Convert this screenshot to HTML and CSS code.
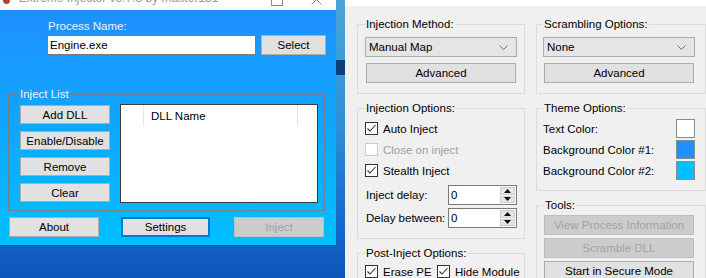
FILE: index.html
```html
<!DOCTYPE html>
<html>
<head>
<meta charset="utf-8">
<title>Extreme Injector</title>
<link rel="stylesheet" href="styles.css">
</head>
<body>
<div class="desktop">
  <div class="desk-mark"></div>

  <div class="win win-main">
    <div class="titlebar">
      <span class="app-icon"></span>
      <span class="title">Extreme Injector v3.7.3 by master131</span>
      <span class="ctrl ctrl-min"></span>
      <span class="ctrl ctrl-max"></span>
      <span class="ctrl ctrl-close">
        <svg width="11" height="11" viewBox="0 0 11 11"><path d="M0.5 0.5L10.5 10.5M10.5 0.5L0.5 10.5" stroke="#8a8a8a" stroke-width="1" fill="none"/></svg>
      </span>
    </div>
    <div class="main-client">
      <div class="proc-label">Process Name:</div>
      <div class="proc-row">
        <div class="textbox">Engine.exe</div>
        <button class="btn btn-select">Select</button>
      </div>
      <fieldset class="inject-list">
        <legend>Inject List</legend>
        <div class="il-body">
          <div class="il-buttons">
            <button class="btn btn-il">Add DLL</button>
            <button class="btn btn-il">Enable/Disable</button>
            <button class="btn btn-il">Remove</button>
            <button class="btn btn-il">Clear</button>
          </div>
          <div class="listbox">
            <div class="lb-header">
              <span class="lb-col lb-c0"></span>
              <span class="lb-col lb-c1">DLL Name</span>
              <span class="lb-col lb-c2"></span>
            </div>
          </div>
        </div>
      </fieldset>
      <div class="bottom-row">
        <button class="btn btn-bottom btn-about">About</button>
        <button class="btn btn-bottom btn-settings">Settings</button>
        <button class="btn btn-bottom btn-disabled btn-inject">Inject</button>
      </div>
    </div>
  </div>

  <div class="win win-settings">
    <div class="titlebar titlebar-settings"></div>
    <div class="settings-client">
      <div class="col col-left">
        <fieldset class="grp grp-method">
          <legend>Injection Method:</legend>
          <div class="combo"><span>Manual Map</span>
            <svg class="chev" width="9" height="5" viewBox="0 0 9 5"><polyline points="0.5,0.5 4.5,4.5 8.5,0.5" fill="none" stroke="#6d6d6d" stroke-width="1"/></svg>
          </div>
          <button class="btn btn-wide">Advanced</button>
        </fieldset>

        <fieldset class="grp grp-options">
          <legend>Injection Options:</legend>
          <div class="chk">
            <span class="box"><svg width="11" height="11" viewBox="0 0 11 11"><polyline points="1.5,5.5 4,8 9.5,2" fill="none" stroke="#333" stroke-width="1.1"/></svg></span>
            <span>Auto Inject</span>
          </div>
          <div class="chk chk-disabled">
            <span class="box"></span>
            <span>Close on inject</span>
          </div>
          <div class="chk">
            <span class="box"><svg width="11" height="11" viewBox="0 0 11 11"><polyline points="1.5,5.5 4,8 9.5,2" fill="none" stroke="#333" stroke-width="1.1"/></svg></span>
            <span>Stealth Inject</span>
          </div>
          <div class="num-row num-first">
            <span class="num-label">Inject delay:</span>
            <div class="numeric"><span class="num-val">0</span>
              <div class="spin">
                <span class="spin-btn"><svg width="7" height="4" viewBox="0 0 7 4"><polygon points="3.5,0 7,4 0,4" fill="#111"/></svg></span>
                <span class="spin-btn"><svg width="7" height="4" viewBox="0 0 7 4"><polygon points="0,0 7,0 3.5,4" fill="#111"/></svg></span>
              </div>
            </div>
          </div>
          <div class="num-row">
            <span class="num-label">Delay between:</span>
            <div class="numeric"><span class="num-val">0</span>
              <div class="spin">
                <span class="spin-btn"><svg width="7" height="4" viewBox="0 0 7 4"><polygon points="3.5,0 7,4 0,4" fill="#111"/></svg></span>
                <span class="spin-btn"><svg width="7" height="4" viewBox="0 0 7 4"><polygon points="0,0 7,0 3.5,4" fill="#111"/></svg></span>
              </div>
            </div>
          </div>
        </fieldset>

        <fieldset class="grp grp-post">
          <legend>Post-Inject Options:</legend>
          <div class="chk-row">
            <div class="chk chk-erase">
              <span class="box"><svg width="11" height="11" viewBox="0 0 11 11"><polyline points="1.5,5.5 4,8 9.5,2" fill="none" stroke="#333" stroke-width="1.1"/></svg></span>
              <span>Erase PE</span>
            </div>
            <div class="chk">
              <span class="box"><svg width="11" height="11" viewBox="0 0 11 11"><polyline points="1.5,5.5 4,8 9.5,2" fill="none" stroke="#333" stroke-width="1.1"/></svg></span>
              <span>Hide Module</span>
            </div>
          </div>
        </fieldset>
      </div>

      <div class="col col-right">
        <fieldset class="grp grp-scramble">
          <legend>Scrambling Options:</legend>
          <div class="combo"><span>None</span>
            <svg class="chev" width="9" height="5" viewBox="0 0 9 5"><polyline points="0.5,0.5 4.5,4.5 8.5,0.5" fill="none" stroke="#6d6d6d" stroke-width="1"/></svg>
          </div>
          <button class="btn btn-wide">Advanced</button>
        </fieldset>

        <fieldset class="grp grp-theme">
          <legend>Theme Options:</legend>
          <div class="theme-row"><span>Text Color:</span><span class="swatch sw-white"></span></div>
          <div class="theme-row"><span>Background Color #1:</span><span class="swatch sw-blue1"></span></div>
          <div class="theme-row"><span>Background Color #2:</span><span class="swatch sw-blue2"></span></div>
        </fieldset>

        <fieldset class="grp grp-tools">
          <legend>Tools:</legend>
          <button class="btn btn-tool btn-disabled">View Process Information</button>
          <button class="btn btn-tool btn-disabled">Scramble DLL</button>
          <button class="btn btn-tool">Start in Secure Mode</button>
        </fieldset>
      </div>
    </div>
  </div>
</div>
</body>
</html>
```

FILE: styles.css
```css
* { box-sizing: border-box; }

html, body {
  margin: 0;
  padding: 0;
}

body {
  width: 706px;
  height: 278px;
  overflow: hidden;
  font-family: "Segoe UI", "Liberation Sans", Arial, sans-serif;
  font-size: 11.5px;
  color: #000;
}

.desktop {
  position: relative;
  width: 706px;
  height: 278px;
  overflow: hidden;
  background: linear-gradient(180deg, #4aa6d8 0%, #2f8fd6 45%, #1467c9 82%, #0b55b8 100%);
}

.desk-mark {
  position: absolute;
  left: 336px;
  top: 60px;
  width: 9px;
  height: 15px;
  background: #0b3f78;
}

/* ---------- windows ---------- */
.win {
  position: absolute;
  display: flex;
  flex-direction: column;
}

.win-main {
  left: 0;
  top: -11px;
  width: 336px;
  height: 256px;
}

.win-settings {
  left: 345px;
  top: -20px;
  width: 370px;
  height: 320px;
  background: #f0f0f0;
}

.titlebar {
  height: 21px;
  flex: none;
  background: #fff;
  display: flex;
  align-items: center;
  position: relative;
}

.titlebar-settings {
  height: 26px;
}

.app-icon {
  width: 8px;
  height: 8px;
  margin-left: 3px;
  border-radius: 50%;
  background: #b5452a;
}

.title {
  margin-left: 9px;
  margin-top: -3px;
  color: #9a9a9a;
  font-size: 12px;
  white-space: nowrap;
  flex: 1;
}

.ctrl {
  width: 46px;
  height: 21px;
  display: flex;
  align-items: center;
  justify-content: center;
}

.ctrl-max::before {
  content: "";
  width: 10px;
  height: 10px;
  border: 1px solid #8a8a8a;
}

.ctrl-min::before {
  content: "";
  width: 10px;
  height: 1px;
  background: #8a8a8a;
}

/* ---------- main client ---------- */
.main-client {
  flex: 1;
  background: linear-gradient(180deg, #1e90ff 0%, #00bfff 100%);
  color: #fff;
  padding-top: 9px;
}

.proc-label {
  margin-left: 48px;
  height: 15px;
  line-height: 15px;
  color: #f4f0ff;
}

.proc-row {
  display: flex;
  margin-top: 1px;
  margin-left: 47px;
}

.textbox {
  width: 209px;
  height: 20px;
  background: #fff;
  border: 1px solid #7a7a7a;
  color: #000;
  line-height: 18px;
  padding-left: 2px;
}

.btn {
  font-family: inherit;
  font-size: inherit;
  color: #000;
  background: #e1e1e1;
  border: 1px solid #adadad;
  padding: 0;
  margin: 0;
  display: flex;
  align-items: center;
  justify-content: center;
  white-space: nowrap;
}

.btn-select {
  width: 65px;
  height: 20px;
  margin-left: 5px;
}

.inject-list {
  margin: 32px 0 0 8px;
  width: 317px;
  border: 1px solid #6f7d8c;
  padding: 2px 6px 7px 11px;
  min-width: 0;
}

.inject-list legend {
  padding: 0 2px;
  margin-left: -2px;
  line-height: 15px;
  color: #f4f0ff;
}

.il-body {
  display: flex;
}

.il-buttons {
  display: flex;
  flex-direction: column;
  gap: 7px;
  margin-top: 1px;
  width: 90px;
}

.btn-il {
  width: 90px;
  height: 19px;
}

.listbox {
  margin-left: 10px;
  width: 198px;
  height: 99px;
  background: #fff;
  border: 1px solid #3a3a3a;
  color: #000;
}

.lb-header {
  display: flex;
  height: 21px;
}

.lb-col {
  display: flex;
  align-items: center;
  border-right: 1px solid #e5e5e5;
}

.lb-c0 { width: 23px; }
.lb-c1 { width: 154px; padding-left: 7px; }
.lb-c2 { border-right: none; flex: 1; }

.bottom-row {
  display: flex;
  margin-top: 6px;
  margin-left: 9px;
}

.btn-bottom {
  height: 20px;
  width: 90px;
}

.btn-settings {
  margin-left: 22px;
  width: 89px;
  border: 1px solid #0078d7;
  box-shadow: inset 0 0 0 1px #0078d7;
}

.btn-inject {
  margin-left: 24px;
}

.btn-disabled {
  background: #cccccc;
  border-color: #bfbfbf;
  color: #a3a3a3;
}

/* ---------- settings client ---------- */
.settings-client {
  flex: 1;
  display: flex;
  gap: 11px;
  padding: 11px 0 0 12px;
}

.col {
  display: flex;
  flex-direction: column;
  gap: 7px;
}

.col-left { width: 168px; }
.col-right { width: 170px; }

.grp {
  margin: 0;
  min-width: 0;
  width: 100%;
  border: 1px solid #dcdcdc;
  padding: 5px 7px 10px 7px;
}

.grp legend {
  padding: 0 1px;
  margin-left: 0;
  line-height: 15px;
}

.combo {
  height: 20px;
  background: #e5e5e5;
  border: 1px solid #acacac;
  display: flex;
  align-items: center;
  justify-content: space-between;
  padding: 0 8px 0 3px;
}

.btn-wide {
  margin: 6px 1px 0 1px;
  width: calc(100% - 2px);
  height: 20px;
}

.grp-scramble {
  padding-left: 6px;
  padding-right: 10px;
}

.grp-options {
  padding-top: 2px;
}

.chk {
  height: 21px;
  display: flex;
  align-items: center;
  gap: 5px;
  white-space: nowrap;
  flex: none;
}

.box {
  width: 13px;
  height: 13px;
  flex: none;
  background: #fff;
  border: 1px solid #333;
  display: flex;
  align-items: center;
  justify-content: center;
}

.chk-disabled {
  color: #a0a0a0;
}

.chk-disabled .box {
  border-color: #cccccc;
}

.num-row {
  display: flex;
  align-items: center;
  justify-content: space-between;
  margin-top: 3px;
  padding-left: 1px;
}

.num-first {
  margin-top: 4px;
}

.numeric {
  width: 69px;
  height: 20px;
  background: #fff;
  border: 1px solid #7a7a7a;
  display: flex;
  align-items: center;
  justify-content: space-between;
  padding-left: 2px;
}

.spin {
  width: 16px;
  height: 18px;
  display: flex;
  flex-direction: column;
  gap: 1px;
  padding: 1px 1px 1px 0;
}

.spin-btn {
  flex: 1;
  background: #e5e5e5;
  border: 1px solid #cfcfcf;
  display: flex;
  align-items: center;
  justify-content: center;
}

.grp-post {
  padding-top: 0;
  flex: 1;
}

.chk-row {
  display: flex;
}

.chk-erase {
  width: 72px;
}

.grp-theme {
  padding: 2px 10px 9px 6px;
}

.theme-row {
  display: flex;
  align-items: center;
  justify-content: space-between;
  height: 21px;
}

.swatch {
  width: 19px;
  height: 19px;
  border: 1px solid #8c8c8c;
}

.sw-white { background: #ffffff; }
.sw-blue1 { background: #1e90ff; }
.sw-blue2 { background: #00bfff; }

.grp-tools {
  padding: 2px 11px 0 7px;
  flex: 1;
}

.btn-tool {
  width: 150px;
  height: 20px;
  margin-bottom: 3px;
}
```
